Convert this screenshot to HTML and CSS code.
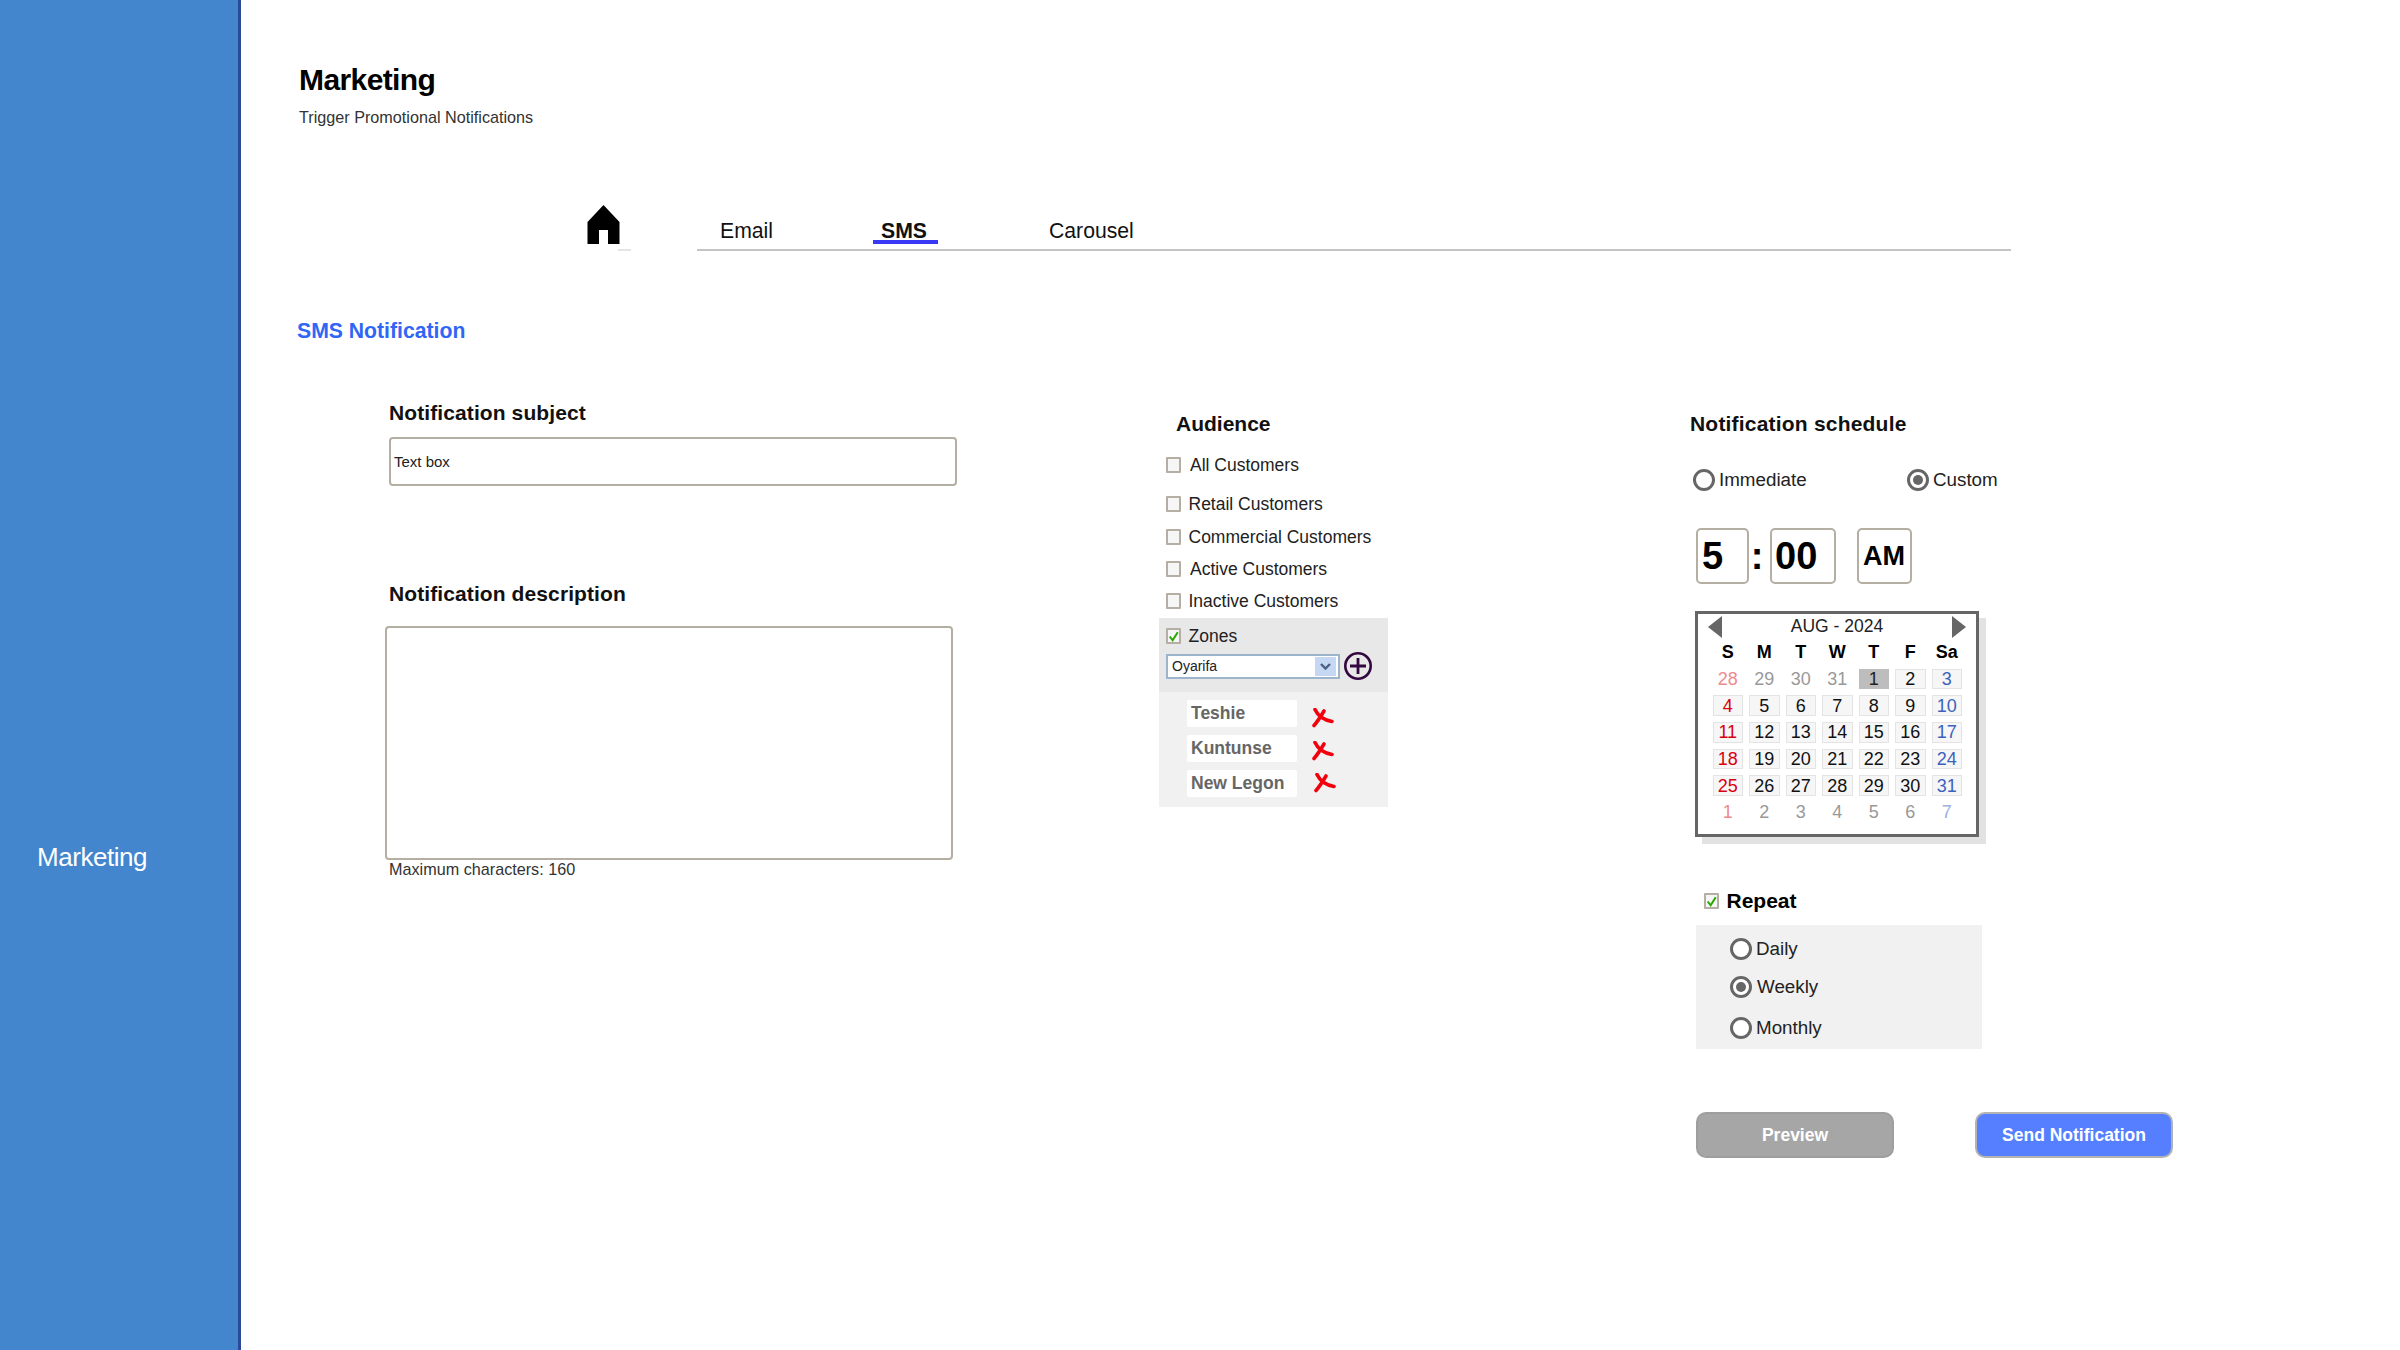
FILE: index.html
```html
<!DOCTYPE html>
<html lang="en">
<head>
  <meta charset="UTF-8" />
  <title>Marketing</title>
  <link rel="stylesheet" href="styles.css">
</head>
<body>
  <aside class="sidebar">
    <div class="sidebar-item">Marketing</div>
  </aside>

  <main class="content">
    <h1>Marketing</h1>
    <p class="subtitle">Trigger Promotional Notifications</p>

    <nav class="tabs">
      <div class="home">
        <svg width="33" height="39" viewBox="0 0 33 39"><path d="M16.5 0 L32.5 17 V39 H21 V25 H12 V39 H0.5 V17 Z" fill="#000"/></svg>
        <span class="home-mark"></span>
      </div>
      <div class="tab-list">
        <a class="tab tab-email">Email</a>
        <a class="tab tab-sms">SMS</a>
        <a class="tab tab-carousel">Carousel</a>
      </div>
    </nav>

    <h2 class="section-title">SMS Notification</h2>

    <div class="form-grid">
      <section class="col-message">
        <h3 class="subject-label">Notification subject</h3>
        <input class="subject" type="text" value="Text box" />
        <h3 class="desc-label">Notification description</h3>
        <textarea class="desc"></textarea>
        <div class="hint">Maximum characters: 160</div>
      </section>

      <section class="col-audience">
        <h3 class="audience-label">Audience</h3>
        <div class="check-row row-all"><span class="box"></span><span class="shift">All Customers</span></div>
        <div class="check-row row-retail"><span class="box"></span>Retail Customers</div>
        <div class="check-row row-comm"><span class="box"></span>Commercial Customers</div>
        <div class="check-row row-active"><span class="box"></span><span class="shift">Active Customers</span></div>
        <div class="check-row row-inactive"><span class="box"></span>Inactive Customers</div>

        <div class="zones">
          <div class="check-row"><span class="box"><svg width="13" height="13" viewBox="0 0 13 13"><path d="M2 6.5 L5.5 11 L11.5 1.5" fill="none" stroke="#2aa800" stroke-width="2.4"/></svg></span>Zones</div>
          <div class="zone-pick">
            <div class="select">
              <span>Oyarifa</span>
              <span class="select-btn"><svg width="11" height="7" viewBox="0 0 11 7"><path d="M1 1 L5.5 5.5 L10 1" fill="none" stroke="#4a5f85" stroke-width="2.4"/></svg></span>
            </div>
            <svg class="plus" width="30" height="30" viewBox="0 0 30 30"><circle cx="15" cy="15" r="12.7" fill="none" stroke="#33073f" stroke-width="2.6"/><path d="M15 7 V23 M7 15 H23" stroke="#33073f" stroke-width="2.8"/></svg>
          </div>
        </div>

        <div class="zone-list">
          <div class="zone-row"><span class="chip">Teshie</span><svg class="remove first" width="22" height="20" viewBox="0 0 22 20"><path d="M3 1.5 C6 8 12 12 20 13.5 M12 3 C9 8 6 13 2 17.5" fill="none" stroke="#f2000c" stroke-width="3.6" stroke-linecap="round"/></svg></div>
          <div class="zone-row"><span class="chip">Kuntunse</span><svg class="remove second" width="22" height="20" viewBox="0 0 22 20"><path d="M3 1.5 C6 8 12 12 20 13.5 M12 3 C9 8 6 13 2 17.5" fill="none" stroke="#f2000c" stroke-width="3.6" stroke-linecap="round"/></svg></div>
          <div class="zone-row"><span class="chip">New Legon</span><svg class="remove third" width="22" height="20" viewBox="0 0 22 20"><path d="M3 1.5 C6 8 12 12 20 13.5 M12 3 C9 8 6 13 2 17.5" fill="none" stroke="#f2000c" stroke-width="3.6" stroke-linecap="round"/></svg></div>
        </div>
      </section>

      <section class="col-schedule">
        <h3 class="schedule-label">Notification schedule</h3>
        <div class="when">
          <label class="radio-row"><span class="radio"></span>Immediate</label>
          <label class="radio-row"><span class="radio on"></span>Custom</label>
        </div>

        <div class="time">
          <span class="time-box hour">5</span>
          <span class="colon">:</span>
          <span class="time-box mins">00</span>
          <span class="time-box ampm">AM</span>
        </div>

        <div class="calendar">
          <div class="cal-head">
            <span class="arrow left"></span>
            <span>AUG - 2024</span>
            <span class="arrow right"></span>
          </div>
          <div class="cal-grid">
            <b>S</b><b>M</b><b>T</b><b>W</b><b>T</b><b>F</b><b>Sa</b>
            <span class="out sun">28</span><span class="out">29</span><span class="out">30</span><span class="out">31</span><span class="today">1</span><span class="day">2</span><span class="day sat">3</span>
            <span class="day sun">4</span><span class="day">5</span><span class="day">6</span><span class="day">7</span><span class="day">8</span><span class="day">9</span><span class="day sat">10</span>
            <span class="day sun">11</span><span class="day">12</span><span class="day">13</span><span class="day">14</span><span class="day">15</span><span class="day">16</span><span class="day sat">17</span>
            <span class="day sun">18</span><span class="day">19</span><span class="day">20</span><span class="day">21</span><span class="day">22</span><span class="day">23</span><span class="day sat">24</span>
            <span class="day sun">25</span><span class="day">26</span><span class="day">27</span><span class="day">28</span><span class="day">29</span><span class="day">30</span><span class="day sat">31</span>
            <span class="out sun">1</span><span class="out">2</span><span class="out">3</span><span class="out">4</span><span class="out">5</span><span class="out">6</span><span class="out sat">7</span>
          </div>
        </div>

        <div class="repeat-head"><span class="box"><svg width="13" height="13" viewBox="0 0 13 13"><path d="M2 6.5 L5.5 11 L11.5 1.5" fill="none" stroke="#2aa800" stroke-width="2.4"/></svg></span>Repeat</div>
        <div class="repeat">
          <label class="radio-row r-daily"><span class="radio"></span>Daily</label>
          <label class="radio-row r-weekly"><span class="radio on"></span>Weekly</label>
          <label class="radio-row r-monthly"><span class="radio"></span>Monthly</label>
        </div>

        <div class="actions">
          <button class="btn btn-preview">Preview</button>
          <button class="btn btn-send">Send Notification</button>
        </div>
      </section>
    </div>
  </main>
</body>
</html>
```

FILE: styles.css
```css
* {
  box-sizing: border-box;
}

body {
  margin: 0;
  height: 1350px;
  display: flex;
  font-family: "Liberation Sans", Arial, sans-serif;
  color: #111;
  background: #fff;
  overflow: hidden;
}

/* sidebar */
.sidebar {
  width: 241px;
  height: 1350px;
  flex: none;
  background: #4386cd;
  border-right: 3px solid #2a4a98;
  padding-top: 841px;
}

.sidebar-item {
  padding-left: 37px;
  color: #fff;
  font-size: 26px;
  line-height: 32px;
  letter-spacing: -0.45px;
}

/* header */
.content {
  flex: 1;
  padding: 0 0 0 58px;
}

h1 {
  margin: 0;
  padding-top: 60px;
  font-size: 30px;
  line-height: 40px;
  font-weight: bold;
  letter-spacing: -0.6px;
  color: #000;
}

.subtitle {
  margin: 7px 0 0;
  font-size: 16.2px;
  line-height: 20px;
  color: #333;
}

/* tabs */
.tabs {
  display: flex;
  align-items: flex-start;
  margin: 78px 0 0 288px;
  height: 62px;
}

.home {
  width: 110px;
  position: relative;
  flex: none;
}

.home svg {
  display: block;
}

.home-mark {
  position: absolute;
  left: 31px;
  top: 44px;
  width: 13px;
  height: 2px;
  background: #e4e4e4;
}

.tab-list {
  width: 1314px;
  height: 46px;
  border-bottom: 2px solid #c4c4c4;
  display: flex;
  position: relative;
}

.tab {
  position: absolute;
  top: 13px;
  font-size: 21.2px;
  line-height: 26px;
  color: #111;
}

.tab-email {
  left: 23px;
}

.tab-sms {
  left: 176px;
  width: 65px;
  padding-left: 8px;
  height: 26px;
  font-weight: bold;
  border-bottom: 4px solid #3838f5;
}

.tab-carousel {
  left: 352px;
}

.section-title {
  margin: 51px 0 0 -2px;
  font-size: 21.2px;
  line-height: 26px;
  font-weight: bold;
  color: #2f66f5;
}

/* form */
.form-grid {
  display: grid;
  grid-template-columns: 774px 536px 1fr;
  margin: 0 0 0 86px;
}

h3 {
  margin: 0;
  font-size: 21px;
  line-height: 24px;
  font-weight: bold;
  color: #111;
}

.subject-label {
  margin: 57px 0 0 4px;
  letter-spacing: 0.1px;
}

.subject {
  display: block;
  width: 568px;
  height: 49px;
  margin: 12px 0 0 4px;
  padding: 0 0 0 3px;
  border: 2px solid #b5aea3;
  border-radius: 4px;
  font-family: inherit;
  font-size: 15px;
  color: #222;
  outline: none;
}

.desc-label {
  margin: 96px 0 0 4px;
  letter-spacing: 0.1px;
}

.desc {
  display: block;
  width: 568px;
  height: 234px;
  margin: 20px 0 0;
  border: 2px solid #b5aea3;
  border-radius: 4px;
  resize: none;
  outline: none;
}

.hint {
  margin: -1px 0 0 4px;
  font-size: 16.2px;
  line-height: 20px;
  color: #333;
}

/* audience */
.audience-label {
  margin: 68px 0 0 17px;
}

.check-row {
  display: flex;
  align-items: center;
  height: 20px;
  padding-left: 7px;
  font-size: 17.5px;
  color: #222;
}

.box {
  width: 15px;
  height: 16px;
  flex: none;
  margin-right: 7.5px;
  border: 2px solid #b5aea3;
  border-radius: 1px;
  background: #f6f6f6;
  display: flex;
  align-items: center;
  justify-content: center;
}

.shift {
  margin-left: 1.5px;
}

.row-all,
.row-retail {
  margin-top: 19px;
}

.row-comm {
  margin-top: 13px;
}

.row-active {
  margin-top: 12px;
}

.row-inactive {
  margin-top: 12px;
}

.zones {
  margin-top: 7px;
  width: 229px;
  height: 74px;
  background: #e8e8e8;
  padding-top: 8px;
}

.zone-pick {
  display: flex;
  align-items: center;
  margin: 5px 0 0 7px;
}

.select {
  width: 174px;
  height: 25px;
  border: 2px solid #9db4cd;
  background: #fff;
  display: flex;
  align-items: center;
  justify-content: space-between;
  padding: 1px 2px 1px 4px;
  font-size: 14px;
  color: #222;
}

.select-btn {
  width: 21px;
  height: 19px;
  background: #c6d7f3;
  display: flex;
  align-items: center;
  justify-content: center;
}

.plus {
  margin-left: 3px;
}

.zone-list {
  width: 229px;
  height: 115px;
  background: #f1f1f1;
  padding: 8px 0 0 28px;
}

.zone-row {
  display: flex;
  align-items: center;
  height: 27px;
  margin-bottom: 8px;
}

.chip {
  width: 110px;
  height: 100%;
  padding-left: 4px;
  background: #fff;
  border-radius: 2px;
  font-size: 17.5px;
  line-height: 27px;
  font-weight: bold;
  color: #666;
}

.remove {
  filter: blur(0.5px);
}

.remove.first {
  margin: 8px 0 0 15px;
}

.remove.second {
  margin: 5px 0 0 15px;
}

.remove.third {
  margin: 0 0 2px 17px;
}

/* schedule */
.schedule-label {
  margin: 68px 0 0 -5px;
  letter-spacing: 0.2px;
}

.when {
  display: flex;
  margin: 33px 0 0 -2px;
}

.radio-row {
  display: flex;
  align-items: center;
  font-size: 18.8px;
  color: #222;
}

.when .radio-row {
  width: 214px;
}

.radio {
  width: 22px;
  height: 22px;
  flex: none;
  margin-right: 4px;
  border: 3px solid #666;
  border-radius: 50%;
  background: #fff;
  display: flex;
  align-items: center;
  justify-content: center;
}

.radio.on::after {
  content: "";
  width: 10px;
  height: 10px;
  border-radius: 50%;
  background: #666;
}

.time {
  display: flex;
  align-items: center;
  margin: 37px 0 0 1px;
}

.time-box {
  height: 56px;
  border: 2px solid #b5aea3;
  border-radius: 5px;
  font-weight: bold;
  color: #000;
  display: flex;
  align-items: center;
}

.hour {
  width: 53px;
  padding-left: 4px;
  font-size: 38px;
}

.colon {
  width: 21px;
  padding-right: 5px;
  text-align: center;
  font-size: 38px;
  font-weight: bold;
  line-height: 56px;
  color: #000;
}

.mins {
  width: 66px;
  padding-left: 3px;
  font-size: 38px;
}

.ampm {
  width: 55px;
  margin-left: 21px;
  padding-right: 1px;
  justify-content: center;
  font-size: 27px;
}

.calendar {
  width: 284px;
  height: 226px;
  margin: 27px 0 0;
  border: 3px solid #666;
  box-shadow: 7px 7px 0 #e2e2e2;
  background: #fff;
}

.cal-head {
  display: flex;
  justify-content: space-between;
  align-items: center;
  height: 23px;
  padding: 0 10px;
  font-size: 17.5px;
  color: #222;
  margin-top: 1px;
}

.arrow {
  width: 0;
  height: 0;
  border-top: 11px solid transparent;
  border-bottom: 11px solid transparent;
}

.arrow.left {
  border-right: 14px solid #666;
}

.arrow.right {
  border-left: 14px solid #666;
}

.cal-grid {
  display: grid;
  grid-template-columns: repeat(7, 36.5px);
  grid-auto-rows: 26.7px;
  padding: 1px 0 0 11.5px;
  font-size: 18px;
  text-align: center;
}

.cal-grid b,
.cal-grid span {
  display: flex;
  align-items: center;
  justify-content: center;
  line-height: 1;
}

.cal-grid b {
  color: #000;
}

.cal-grid span {
  margin: 3px 3px;
  color: #111;
}

.cal-grid .day {
  background: #f6f6f6;
  border: 1px solid #e4e4e4;
}

.cal-grid .today {
  background: #bdbdbd;
  color: #222;
}

.cal-grid .sun {
  color: #d9000d;
}

.cal-grid .sat {
  color: #3c62bd;
}

.cal-grid .out {
  color: #999;
}

.cal-grid .out.sun {
  color: #ee8a8f;
}

.cal-grid .out.sat {
  color: #9db0de;
}

.repeat-head {
  display: flex;
  align-items: center;
  margin: 51px 0 0 9px;
  height: 26px;
  font-size: 21px;
  font-weight: bold;
  color: #000;
}

.repeat {
  width: 286px;
  height: 124px;
  margin: 11px 0 0 1px;
  background: #f1f1f1;
  padding: 13px 0 0 34px;
}

.r-daily {
  height: 22px;
}

.r-weekly {
  height: 22px;
  margin-top: 16px;
}

.r-weekly .radio {
  margin-right: 5px;
}

.r-monthly {
  height: 22px;
  margin-top: 19px;
}

.actions {
  display: flex;
  gap: 81px;
  margin: 63px 0 0 1px;
}

.btn {
  width: 198px;
  height: 46px;
  border: 2px solid #b3b3b3;
  border-radius: 10px;
  color: #fff;
  font-family: inherit;
  font-size: 17.5px;
  font-weight: bold;
}

.btn-preview {
  background: #a6a6a6;
  border-color: #9e9e9e;
}

.btn-send {
  background: #557fff;
}
```
